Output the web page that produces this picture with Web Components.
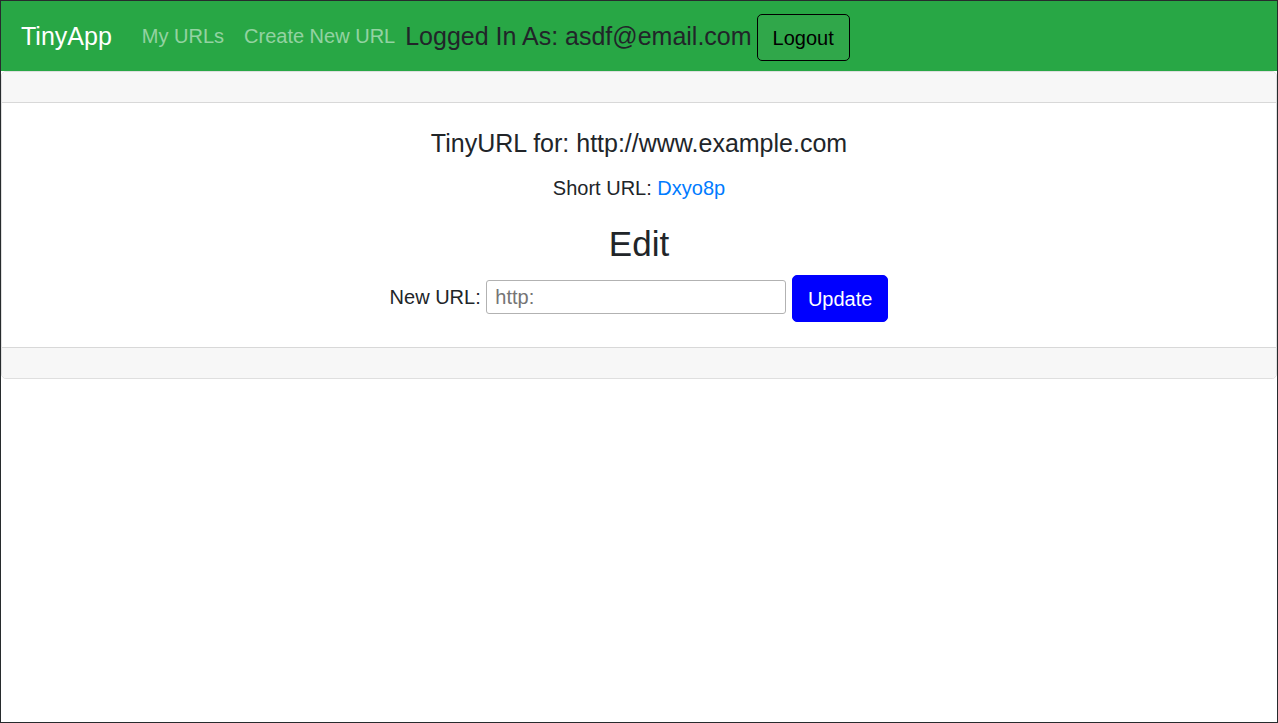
<!DOCTYPE html>
<html lang="en">
<head>
<meta charset="utf-8">
<meta name="viewport" content="width=device-width, initial-scale=1">
<title>TinyApp</title>
<style>
  html { height: 100%; }
  body {
    box-sizing: border-box;
    min-height: 100%;
    margin: 0;
    border: 1px solid #272b2d;
    background: #fff;
    color: #212529;
    font: 20px/30px "Liberation Sans", Arial, sans-serif;
  }
</style>
</head>
<body>
<tiny-navbar email="asdf@email.com">
  <nav-item href="#urls">My URLs</nav-item>
  <nav-item href="#new">Create New URL</nav-item>
</tiny-navbar>
<url-card url="http://www.example.com" short="Dxyo8p">
  <url-edit-form></url-edit-form>
</url-card>

<script>
class BaseElement extends HTMLElement {
  connectedCallback() {
    if (this.shadowRoot) return;
    const template = document.createElement('template');
    template.innerHTML = this.render();
    this.attachShadow({ mode: 'open' }).append(template.content.cloneNode(true));
    this.ready();
  }
  ready() {}
}

customElements.define('app-button', class extends BaseElement {
  render() {
    return `<style>
      :host { display: inline-block; vertical-align: middle; }
      button {
        display: block;
        margin: 0;
        padding: 8px 15px 7px;
        border: 1px solid blue;
        border-radius: 5px;
        background: blue;
        color: #fff;
        font: inherit;
        font-size: 20px;
        line-height: 30px;
        cursor: pointer;
      }
      :host([outline]) button { border-color: #000; background: #30a74a; color: #000; }
    </style><button type="button"><slot></slot></button>`;
  }
});

customElements.define('nav-item', class extends BaseElement {
  render() {
    return `<style>
      :host { display: block; }
      a { display: block; padding: 10px; color: rgba(255, 255, 255, .5); text-decoration: none; }
    </style><a><slot></slot></a>`;
  }
  ready() {
    this.shadowRoot.querySelector('a').href = this.getAttribute('href');
  }
});

customElements.define('tiny-navbar', class extends BaseElement {
  render() {
    return `<style>
      :host { display: block; background: #28a745; }
      nav { display: flex; flex-wrap: wrap; align-items: center; padding: 10px 20px; }
      .brand { margin-right: 20px; color: #fff; text-decoration: none; }
      .brand, .user { font-size: 25px; }
      .user { padding-right: 5px; }
      app-button { align-self: flex-end; }
    </style>
    <nav>
      <a class="brand" href="#">TinyApp</a>
      <slot></slot>
      <span class="user"></span>
      <app-button outline>Logout</app-button>
    </nav>`;
  }
  ready() {
    this.shadowRoot.querySelector('.user').textContent = 'Logged In As: ' + this.getAttribute('email');
  }
});

customElements.define('url-card', class extends BaseElement {
  render() {
    return `<style>
      :host {
        display: block;
        overflow: hidden;
        border: 1px solid rgba(0, 0, 0, .125);
        border-radius: 5px;
        text-align: center;
      }
      header, footer { height: 30px; background: #f7f7f7; }
      header { border-bottom: 1px solid #d8d8d8; }
      footer { border-top: 1px solid #d8d8d8; }
      main { padding: 25px; }
      h5 { margin: 0 0 15px; font-size: 25px; font-weight: 400; line-height: 30px; }
      p { margin: 0 0 20px; }
      a { color: #007bff; text-decoration: none; }
    </style>
    <header></header>
    <main>
      <h5></h5>
      <p>Short URL: <a></a></p>
      <slot></slot>
    </main>
    <footer></footer>`;
  }
  ready() {
    const root = this.shadowRoot;
    const short = this.getAttribute('short');
    root.querySelector('h5').textContent = 'TinyURL for: ' + this.getAttribute('url');
    const link = root.querySelector('a');
    link.textContent = short;
    link.href = '#' + short;
  }
});

customElements.define('url-edit-form', class extends BaseElement {
  render() {
    return `<style>
      :host { display: block; }
      h2 { margin: 0 0 10px; font-size: 35px; font-weight: 400; line-height: 42px; }
      input {
        box-sizing: border-box;
        width: 300px;
        max-width: 100%;
        height: 34px;
        margin: 0;
        padding: 0 8px;
        border: 1px solid #b2b2b2;
        border-radius: 3px;
        background: #fff;
        color: inherit;
        font: inherit;
      }
      input::placeholder { color: #757575; }
    </style>
    <h2>Edit</h2>
    <form>
      <label for="url">New URL:</label>
      <input id="url" type="text" name="url" placeholder="http:">
      <app-button>Update</app-button>
    </form>`;
  }
});
</script>
</body>
</html>
